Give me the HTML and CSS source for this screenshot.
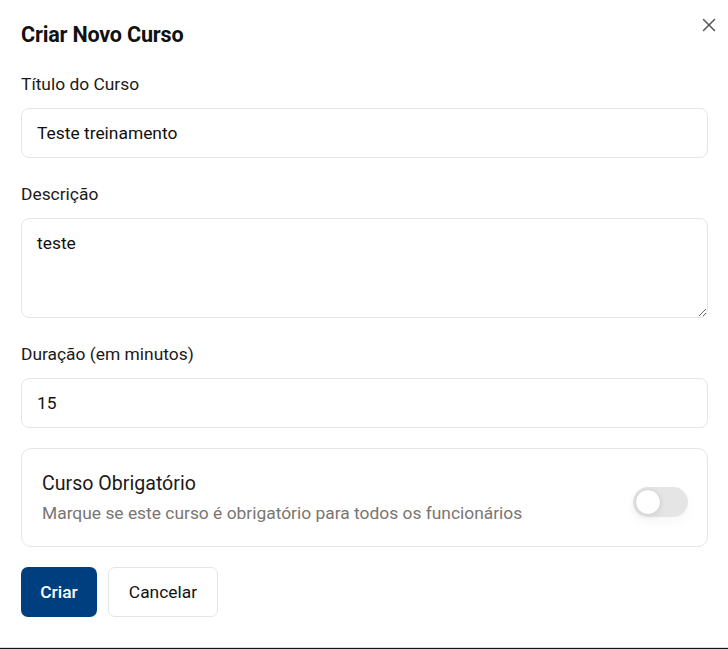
FILE: index.html
```html
<!DOCTYPE html>
<html lang="pt">
<head>
<meta charset="utf-8">
<title>Criar Novo Curso</title>
<link rel="stylesheet" href="styles.css">
</head>
<body>
<div class="modal">
  <button class="close" aria-label="Fechar">
    <svg width="14" height="14" viewBox="0 0 14 14"><path d="M1.5 1.5 L12.5 12.5 M12.5 1.5 L1.5 12.5" stroke="#555" stroke-width="1.5" stroke-linecap="round" fill="none"/></svg>
  </button>
  <h2 class="title">Criar Novo Curso</h2>
  <form class="form">
    <div class="field">
      <label class="label">Título do Curso</label>
      <input class="input" type="text" value="Teste treinamento">
    </div>
    <div class="field">
      <label class="label">Descrição</label>
      <textarea class="input textarea">teste</textarea>
    </div>
    <div class="field field-tight">
      <label class="label">Duração (em minutos)</label>
      <input class="input" type="text" value="15">
    </div>
    <div class="card">
      <div class="card-text">
        <div class="card-title">Curso Obrigatório</div>
        <div class="card-sub">Marque se este curso é obrigatório para todos os funcionários</div>
      </div>
      <div class="switch"><span class="knob"></span></div>
    </div>
    <div class="actions">
      <button type="button" class="btn btn-primary">Criar</button>
      <button type="button" class="btn btn-outline">Cancelar</button>
    </div>
  </form>
</div>
</body>
</html>
```
FILE: styles.css
```css
* { box-sizing: border-box; }
html, body { margin: 0; padding: 0; }
body {
  background: #151515;
  font-family: Roboto, "Noto Sans", Arial, sans-serif;
  color: #1c1917;
}
.modal {
  position: relative;
  width: 728px;
  height: 648px;
  background: #fff;
  border-bottom: 1px solid #dcdcdc;
  padding: 21px 20px 0 21px;
}
.close {
  position: absolute;
  top: 18px;
  right: 12px;
  width: 14px;
  height: 14px;
  padding: 0;
  border: 0;
  background: none;
  display: flex;
}
.title {
  margin: 0 0 23px;
  font-size: 21.6px;
  line-height: 28px;
  font-weight: 700;
  color: #111;
  letter-spacing: -0.2px;
}
.form { display: flex; flex-direction: column; }
.field { display: flex; flex-direction: column; gap: 12px; margin-bottom: 24px; }
.field-tight { margin-bottom: 20px; }
.label {
  font-size: 17.4px;
  line-height: 24px;
  color: #1c1917;
}
.input {
  width: 687px;
  height: 50px;
  border: 1px solid #e7e5e4;
  border-radius: 8px;
  padding: 12px 15px;
  font-family: inherit;
  font-size: 17.4px;
  line-height: 24px;
  color: #111;
  background: #fff;
  outline: none;
}
.textarea {
  height: 100px;
  resize: vertical;
  display: block;
}
.card {
  width: 687px;
  border: 1px solid #e7e5e4;
  border-radius: 10px;
  padding: 21px 20px 21px 20px;
  display: flex;
  align-items: center;
  justify-content: space-between;
  margin-bottom: 20px;
}
.card-title {
  font-size: 19.6px;
  line-height: 28px;
  color: #1c1917;
  margin-bottom: 3px;
}
.card-sub {
  font-size: 17.4px;
  line-height: 24px;
  color: #7a7570;
}
.switch {
  width: 55px;
  height: 30px;
  border-radius: 15px;
  background: #e5e5e5;
  margin-top: 9px;
  margin-right: -1px;
  display: flex;
  align-items: center;
  padding: 0 2px;
  box-shadow: 0 6px 12px rgba(0,0,0,0.03);
}
.knob {
  width: 26px;
  height: 26px;
  border-radius: 50%;
  background: #fff;
  border: 1px solid #d6d3d1;
  box-shadow: 0 2px 6px rgba(0,0,0,0.08);
}
.actions { display: flex; gap: 11px; }
.btn {
  height: 50px;
  border-radius: 7px;
  font-family: inherit;
  font-size: 17.4px;
  line-height: 24px;
  padding: 0;
  cursor: pointer;
}
.btn-primary {
  width: 76px;
  background: #003f7f;
  color: #fff;
  border: 0;
  font-weight: 500;
}
.btn-outline {
  width: 110px;
  background: #fff;
  color: #111;
  border: 1px solid #e7e5e4;
}
```
